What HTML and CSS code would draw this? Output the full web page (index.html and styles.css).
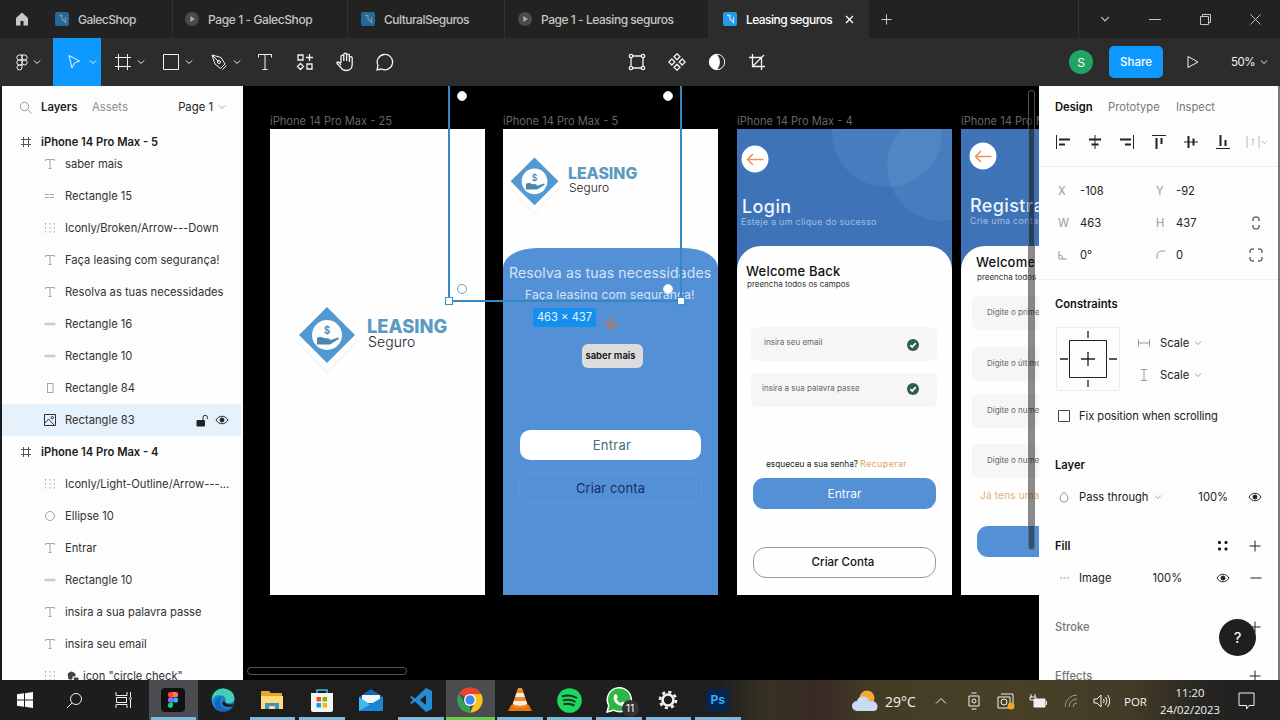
FILE: index.html
```html
<!DOCTYPE html>
<html lang="pt">
<head>
<meta charset="utf-8">
<title>Leasing seguros</title>
<link rel="stylesheet" href="styles.css">
</head>
<body>
<svg class="defs" aria-hidden="true">
  <symbol id="chev" viewBox="0 0 8 8"><path d="M1 2.5 4 5.5 7 2.5"/></symbol>
  <symbol id="file" viewBox="0 0 14 14"><rect width="14" height="14" rx="2" fill="currentColor" stroke="none"/><path d="M4 3.500h3v4M7 7l3.500 3.500V5" stroke="#bfe3fa" stroke-width="1.300"/></symbol>
  <symbol id="proto" viewBox="0 0 14 14"><circle cx="7" cy="7" r="7" fill="#4a4a4a" stroke="none"/><path d="M5.300 4 10 7 5.300 10z" fill="#aaa" stroke="none"/></symbol>
  <symbol id="text" viewBox="0 0 12 12"><path d="M1.500 3V1.500h9V3M6 1.500v9M4.500 10.500h3"/></symbol>
  <symbol id="frame" viewBox="0 0 12 12"><path d="M3.500 1v10M8.500 1v10M1 3.500h10M1 8.500h10"/></symbol>
  <symbol id="group" viewBox="0 0 12 12"><path d="M1.500 1v10M6 1v10M10.500 1v10" stroke-dasharray="1.500 2.500"/></symbol>
  <symbol id="line" viewBox="0 0 12 12"><path d="M1 5.200h10v1.500H1z" stroke-width=".7"/></symbol>
  <symbol id="dline" viewBox="0 0 12 12"><path d="M1 4.500h10M1 7.500h10" stroke-dasharray="4 1"/></symbol>
  <symbol id="tall" viewBox="0 0 12 12"><rect x="3.500" y="1.500" width="5.500" height="9"/></symbol>
  <symbol id="ell" viewBox="0 0 12 12"><circle cx="6" cy="6" r="4.500"/></symbol>
  <symbol id="eye" viewBox="0 0 14 12"><path d="M1 6c3-5 9-5 12 0-3 5-9 5-12 0z"/><circle cx="7" cy="6" r="2" fill="currentColor"/></symbol>
  <symbol id="plus" viewBox="0 0 12 12"><path d="M6 .5v11M.5 6h11"/></symbol>
  <symbol id="logo" viewBox="0 0 64 76"><path d="M2 38 32 70 62 38" stroke="#ececec" fill="none"/><path d="M32 4 60 32 32 60 4 32z" fill="#5299d1" stroke="none"/><circle cx="32" cy="32" r="15" fill="#fdfdfd" stroke="none"/><text x="32" y="31" class="coin">$</text><path d="M22 35q3-2 7 0l5 .5q2 1 0 2l9-3q2 0 0 2l-8 5H22z" fill="#4a87ae" stroke="none"/></symbol>
  <symbol id="back" viewBox="0 0 28 28"><circle cx="14" cy="14" r="13.500" fill="#fff" stroke="none"/><path d="M22.500 14.500h-16M12 9l-5.500 5.500L12 20" stroke="#e8955c" stroke-width="1.500"/></symbol>
  <symbol id="check" viewBox="0 0 12 12"><circle cx="6" cy="6" r="6" fill="#2d5f49" stroke="none"/><path d="M3.300 6.200 5.200 8 8.700 4.200" stroke="#fff" stroke-width="1.700"/></symbol>
</svg>

<div class="app">
  <header class="tabs">
    <div class="home"><svg width="14" height="14" viewBox="0 0 14 14"><path d="M1 6 7 .5 13 6v7.500H8.500V9h-3v4.500H1z" fill="#c8c8c8" stroke="none"/></svg></div>
    <div class="tab t1"><svg class="ti dim"><use href="#file"/></svg><span>GalecShop</span></div>
    <div class="tab t2"><svg class="ti"><use href="#proto"/></svg><span>Page 1 - GalecShop</span></div>
    <div class="tab t3"><svg class="ti dim"><use href="#file"/></svg><span>CulturalSeguros</span></div>
    <div class="tab t4"><svg class="ti"><use href="#proto"/></svg><span>Page 1 - Leasing seguros</span></div>
    <div class="tab active"><svg class="ti"><use href="#file"/></svg><span>Leasing seguros</span><svg class="x" width="9" height="9" viewBox="0 0 9 9"><path d="M1 1l7 7M8 1 1 8" stroke-width="1.300"/></svg></div>
    <div class="newtab"><svg width="11" height="11"><use href="#plus"/></svg></div>
    <div class="win">
      <span><svg width="10" height="10" viewBox="0 0 8 8"><use href="#chev"/></svg></span>
      <span><svg width="12" height="10" viewBox="0 0 12 10"><path d="M0 5.500h12"/></svg></span>
      <span><svg width="11" height="11" viewBox="0 0 11 11"><path d="M.5 2.500h8v8h-8zM2.500 2.500v-2h8v8h-2"/></svg></span>
      <span><svg width="11" height="11" viewBox="0 0 11 11"><path d="M.5.5l10 10M10.500.5l-10 10"/></svg></span>
    </div>
  </header>

  <nav class="toolbar">
    <div class="tools">
      <div class="tool menu"><svg width="12" height="17" viewBox="0 0 12 17"><path d="M6 1H3.300a2.500 2.500 0 0 0 0 5H6zM6 1h2.700a2.500 2.500 0 0 1 0 5H6zM6 6H3.300a2.500 2.500 0 0 0 0 5H6zM6 11H3.300A2.500 2.500 0 1 0 6 13.500z"/><circle cx="8.600" cy="8.500" r="2.500"/></svg><svg class="cv"><use href="#chev"/></svg></div>
      <div class="tool on"><svg width="16" height="16" viewBox="0 0 16 16"><path d="M3 1.500 13.500 7 8.500 9 6 14z"/></svg><svg class="cv"><use href="#chev"/></svg></div>
      <div class="tool"><svg width="18" height="18" viewBox="0 0 18 18"><path d="M4.500 1v16M13.500 1v16M1 4.500h16M1 13.500h16"/></svg><svg class="cv"><use href="#chev"/></svg></div>
      <div class="tool"><svg width="18" height="18" viewBox="0 0 18 18"><path d="M1.500 1.500h15v15h-15z"/></svg><svg class="cv"><use href="#chev"/></svg></div>
      <div class="tool"><svg width="18" height="18" viewBox="0 0 18 18"><path d="M2 2l9 2.500 4 6.500-4.500 4.500L5 11zM2 2l6.500 6.500M12.500 16.500l4-4"/><circle cx="9" cy="9" r="1.500"/></svg><svg class="cv"><use href="#chev"/></svg></div>
      <div class="tool s"><svg width="16" height="18" viewBox="0 0 16 18"><path d="M1.500 4.500v-3h13v3M8 1.500v15M5.500 16.500h5"/></svg></div>
      <div class="tool s"><svg class="bold" width="18" height="18" viewBox="0 0 18 18"><path d="M2 2h5v5H2zM11 11h5v5h-5zM13.500 1v7M10 4.500h7M4.500 10.500 7.500 13.500 4.500 16.500 1.500 13.500z"/></svg></div>
      <div class="tool s"><svg class="bold" width="20" height="20" viewBox="0 0 20 20"><path d="M6 11V4.500a1.400 1.400 0 0 1 2.800 0V9 2.500a1.400 1.400 0 0 1 2.800 0V9 3.500a1.400 1.400 0 0 1 2.800 0V10 6a1.400 1.400 0 0 1 2.800 0v6.500q0 6-6.200 6-3.500 0-5-2.800L2 11.500q-.5-1.500 1-1.500Q4.500 10 6 13"/></svg></div>
      <div class="tool s"><svg class="bold" width="18" height="18" viewBox="0 0 18 18"><path d="M1 17 2 12.500A7.700 7.700 0 1 1 5.500 16z"/></svg></div>
    </div>
    <div class="mid">
      <div class="tool s"><svg class="bold" width="18" height="18" viewBox="0 0 18 18"><path d="M4.500 3h9M4.500 15h9M3 4.500v9M15 4.500v9"/><g><circle cx="3" cy="3" r="1.700"/><circle cx="15" cy="3" r="1.700"/><circle cx="3" cy="15" r="1.700"/><circle cx="15" cy="15" r="1.700"/></g></svg></div>
      <div class="tool s"><svg class="bold" width="18" height="18" viewBox="0 0 18 18"><path d="M9 .8 12 3.800 9 6.800 6 3.800zM9 11.200l3 3-3 3-3-3zM3.800 6l3 3-3 3-3-3zM14.200 6l3 3-3 3-3-3z"/></svg></div>
      <div class="tool s"><svg width="18" height="18" viewBox="0 0 18 18"><circle cx="9" cy="9" r="7.700"/><path d="M9 1.300a7.700 7.700 0 0 0 0 15.400Q12 13 12 9T9 1.300z" fill="#fff" stroke="none"/></svg></div>
      <div class="tool s"><svg class="bold" width="18" height="18" viewBox="0 0 18 18"><path d="M4.500 1v12.500H17M1 4.500h12.500V17M4.500 13.500 16 2"/></svg></div>
    </div>
    <div class="right">
      <span class="avatar">S</span><span class="share">Share</span>
      <svg class="play" width="12" height="14" viewBox="0 0 12 14"><path d="M1 1.500 11 7 1 12.500z"/></svg>
      <span class="zoom">50%</span><svg class="cv"><use href="#chev"/></svg>
    </div>
  </nav>

  <main class="work">
    <aside class="layers">
      <div class="lhead"><svg class="search" width="13" height="13" viewBox="0 0 13 13"><circle cx="5.500" cy="5.500" r="4.200"/><path d="M8.700 8.700 12.500 12.500"/></svg><b>Layers</b><span class="mute">Assets</span><span class="page">Page 1</span><svg class="cv"><use href="#chev"/></svg></div>
      <div class="row top pinned"><svg><use href="#frame"/></svg><span>iPhone 14 Pro Max - 5</span></div>
      <div class="row"><svg><use href="#text"/></svg><span>saber mais</span></div>
      <div class="row"><svg><use href="#dline"/></svg><span>Rectangle 15</span></div>
      <div class="row"><svg><use href="#group"/></svg><span>Iconly/Broken/Arrow---Down</span></div>
      <div class="row"><svg><use href="#text"/></svg><span>Faça leasing com segurança!</span></div>
      <div class="row"><svg><use href="#text"/></svg><span>Resolva as tuas necessidades</span></div>
      <div class="row"><svg><use href="#line"/></svg><span>Rectangle 16</span></div>
      <div class="row"><svg><use href="#line"/></svg><span>Rectangle 10</span></div>
      <div class="row"><svg><use href="#tall"/></svg><span>Rectangle 84</span></div>
      <div class="row sel"><svg viewBox="0 0 12 12"><path d="M.5.500h11v11H.5zM1 9l3.500-4L10 11"/><circle cx="8.300" cy="3.700" r="1.200"/></svg><span>Rectangle 83</span>
        <i class="acts"><svg width="13" height="13" viewBox="0 0 13 13"><path d="M1 6.500h7.500v5.500H1z" fill="currentColor"/><path d="M7 6V3.500a2.200 2.200 0 0 1 4.400 0V5"/></svg><svg width="14" height="12"><use href="#eye"/></svg></i></div>
      <div class="row top"><svg><use href="#frame"/></svg><span>iPhone 14 Pro Max - 4</span></div>
      <div class="row"><svg><use href="#group"/></svg><span>Iconly/Light-Outline/Arrow---...</span></div>
      <div class="row"><svg><use href="#ell"/></svg><span>Ellipse 10</span></div>
      <div class="row"><svg><use href="#text"/></svg><span>Entrar</span></div>
      <div class="row"><svg><use href="#line"/></svg><span>Rectangle 10</span></div>
      <div class="row"><svg><use href="#text"/></svg><span>insira a sua palavra passe</span></div>
      <div class="row"><svg><use href="#text"/></svg><span>insira seu email</span></div>
      <div class="row"><svg><use href="#group"/></svg><svg class="puz" viewBox="0 0 12 12"><path d="M1 4q3-4 7 0v2H5v3H2zM7 8h4v3H8z" fill="#444"/></svg><span>icon "circle check"</span></div>
    </aside>

    <section class="canvas">
      <div class="phone p1"><span class="name n1">iPhone 14 Pro Max - 25</span>
        <svg class="logo l1"><use href="#logo"/></svg><b class="brand b1">LEASING</b><span class="sub s1">Seguro</span></div>
      <div class="phone p2"><span class="name n2">iPhone 14 Pro Max - 5</span>
        <svg class="logo l2"><use href="#logo"/></svg><b class="brand b2">LEASING</b><span class="sub s2">Seguro</span>
        <div class="sheet"></div>
        <span class="m needs">Resolva as tuas necessidades</span>
        <span class="m safe">Faça leasing com segurança!</span>
        <svg class="down" width="14" height="17" viewBox="0 0 14 17"><path d="M7 1v5M2 8l5 6 5-6zM7 6v8" stroke="#b9785a" stroke-width="1.600"/></svg>
        <div class="btn more"><span class="m">saber mais</span></div>
        <div class="btn enter"><span class="m">Entrar</span></div>
        <div class="btn create"><span class="m">Criar conta</span></div>
      </div>
      <div class="phone p3"><span class="name n3">iPhone 14 Pro Max - 4</span>
        <div class="hero"><i class="c1"></i><i class="c2"></i></div>
        <svg class="back k3"><use href="#back"/></svg>
        <span class="m title login">Login</span><span class="m tag tag3">Esteje a um clique do sucesso</span>
        <div class="card"></div>
        <span class="m wel wel3">Welcome Back</span><span class="m fill fill3">preencha todos os campos</span>
        <div class="field f1"><span class="m">insira seu email</span><svg><use href="#check"/></svg></div>
        <div class="field f2"><span class="m">insira a sua palavra passe</span><svg><use href="#check"/></svg></div>
        <span class="m forgot">esqueceu a sua senha?</span><span class="m recover">Recuperar</span>
        <div class="btn go"><span class="m">Entrar</span></div>
        <div class="btn acc"><span class="m">Criar Conta</span></div>
      </div>
      <div class="phone p4"><span class="name n4">iPhone 14 Pro Max - 3</span>
        <div class="hero"></div>
        <svg class="back k4"><use href="#back"/></svg>
        <span class="m title reg">Registrar</span><span class="m tag tag4">Crie uma conta</span>
        <div class="card"></div>
        <span class="m wel wel4">Welcome</span><span class="m fill fill4">preencha todos</span>
        <div class="field g1"><span class="m">Digite o primeiro</span></div>
        <div class="field g2"><span class="m">Digite o último</span></div>
        <div class="field g3"><span class="m">Digite o numero</span></div>
        <div class="field g4"><span class="m">Digite o numero</span></div>
        <span class="m have">Já tens uma</span>
        <div class="btn go4"></div>
      </div>
      <div class="selbox"><i class="h hl"></i><i class="h hr"></i><i class="r ra"></i><i class="r rb"></i><i class="r rc"></i><i class="r rd"></i></div>
      <span class="dims">463 × 437</span>
      <i class="vscroll"></i><i class="hscroll"></i>
    </section>

    <aside class="props">
      <div class="phead"><b>Design</b><span>Prototype</span><span>Inspect</span></div>
      <div class="align">
        <svg viewBox="0 0 14 14"><path d="M.5 0v14"/><path d="M3 4.500h11M3 9.500h6" class="w"/></svg>
        <svg viewBox="0 0 14 14"><path d="M7 0v14"/><path d="M1 4.500h12M3.500 9.500h7" class="w"/></svg>
        <svg viewBox="0 0 14 14"><path d="M13.500 0v14"/><path d="M0 4.500h11M5 9.500h6" class="w"/></svg>
        <svg viewBox="0 0 14 14"><path d="M0 .5h14"/><path d="M4.500 3v11M9.500 3v6" class="w"/></svg>
        <svg viewBox="0 0 14 14"><path d="M0 7h14"/><path d="M4.500 1v12M9.500 3.500v7" class="w"/></svg>
        <svg viewBox="0 0 14 14"><path d="M0 13.500h14"/><path d="M4.500 0v11M9.500 5v6" class="w"/></svg>
        <svg class="dis" viewBox="0 0 22 14"><path d="M1 1v12M13 1v12M7 4v6M5.500 4.500h3M16 6l2.500 2.500L21 6"/></svg>
      </div>
      <div class="geo">
        <i>X</i><span>-108</span><i>Y</i><span>-92</span><span></span>
        <i>W</i><span>463</span><i>H</i><span>437</span><svg width="8" height="14" viewBox="0 0 8 14"><path d="M1 5V3q0-2 2-2h2q2 0 2 2v2M1 9v2q0 2 2 2h2q2 0 2-2V9"/></svg>
        <i><svg width="9" height="9" viewBox="0 0 9 9"><path d="M1 0v8h8M1 4q4 0 4 4"/></svg></i><span>0°</span><i><svg width="10" height="10" viewBox="0 0 10 10"><path d="M1 9V6q0-5 5-5h3"/></svg></i><span>0</span><svg width="14" height="14" viewBox="0 0 14 14"><path d="M1 5V3q0-2 2-2h2M9 1h2q2 0 2 2v2M13 9v2q0 2-2 2H9M5 13H3q-2 0-2-2V9"/></svg>
      </div>
      <h3 class="hc">Constraints</h3>
      <div class="cons">
        <svg class="cbox" width="64" height="64" viewBox="0 0 64 64"><path d="M.5.500h63v63H.5z" stroke="#ececec"/><path d="M13.500 13.500h37v37h-37z"/><path d="M32 4v7M32 53v7M4 32h8M53 32h8M25 32h14M32 25v14" stroke-width="1.300"/></svg>
        <div class="scales">
          <div><svg width="12" height="10" viewBox="0 0 12 10"><path d="M.5 1.500v7M11.500 1.500v7M1 5h10"/></svg><span>Scale</span><svg class="cv"><use href="#chev"/></svg></div>
          <div><svg width="12" height="12" viewBox="0 0 12 12"><path d="M3 .5h6M3 11.500h6M6 1v10"/></svg><span>Scale</span><svg class="cv"><use href="#chev"/></svg></div>
        </div>
      </div>
      <div class="fix"><i></i><span>Fix position when scrolling</span></div>
      <h3 class="hl2">Layer</h3>
      <div class="line"><svg class="lead" viewBox="0 0 12 12"><path d="M6 1q4 3.500 4 6a4 4 0 0 1-8 0Q2 4.500 6 1z"/></svg><span>Pass through</span><svg class="cv"><use href="#chev"/></svg><span class="pc1">100%</span><svg class="end" width="14" height="12"><use href="#eye"/></svg></div>
      <h3 class="hf">Fill<span class="ic"><svg width="12" height="12" viewBox="0 0 12 12"><path d="M1.500 1.500h2v2h-2zM8 1.500h2v2H8zM1.500 8h2v2h-2zM8 8h2v2H8z" fill="#111"/></svg><svg width="12" height="12"><use href="#plus"/></svg></span></h3>
      <div class="line"><svg class="lead" viewBox="0 0 12 12"><path d="M2 6h9" stroke-dasharray="2 1.500"/></svg><span>Image</span><span class="pc2">100%</span><span class="ic"><svg width="14" height="12"><use href="#eye"/></svg><svg width="12" height="12" viewBox="0 0 12 12"><path d="M.5 6h11"/></svg></span></div>
      <h3 class="off">Stroke<span class="ic"><svg width="12" height="12"><use href="#plus"/></svg></span></h3>
      <h3 class="off ef">Effects<span class="ic"><svg width="12" height="12"><use href="#plus"/></svg></span></h3>
      <span class="help">?</span>
    </aside>
  </main>

  <footer class="taskbar">
    <div class="apps">
      <span><svg width="16" height="16" viewBox="0 0 16 16"><path d="M0 2.300 7 1.300v6.200H0zM8 1.200 16 0v7.500H8zM0 8.500h7v6.200L0 13.700zM8 8.500h8V16l-8-1.200z" fill="#fff" stroke="none"/></svg></span>
      <span><svg width="17" height="17" viewBox="0 0 17 17"><circle cx="10" cy="7" r="5.500"/><path d="M6 11 1 16"/></svg></span>
      <span><svg width="18" height="18" viewBox="0 0 18 18"><path d="M1 1v3.500h11V1M1 17v-3.500h11V17M1.500 6.500h10v5h-10zM15.500 1v5M15.500 9v8"/><circle cx="15.500" cy="7.500" r="1"/></svg></span>
      <span class="run cur"><svg width="24" height="24" viewBox="0 0 24 24"><g stroke="none"><rect width="24" height="24" rx="4" fill="#111"/><path d="M12 4H9.500a2.600 2.600 0 0 0 0 5.300H12z" fill="#f24e1e"/><path d="M12 4h2.500a2.600 2.600 0 0 1 0 5.300H12z" fill="#ff7262"/><path d="M12 9.300H9.500a2.600 2.600 0 0 0 0 5.300H12z" fill="#a259ff"/><circle cx="14.600" cy="12" r="2.600" fill="#1abcfe"/><path d="M12 14.600H9.500a2.600 2.600 0 1 0 2.500 2.600z" fill="#0acf83"/></g></svg></span>
      <span><svg width="24" height="24" viewBox="0 0 24 24"><g stroke="none"><circle cx="12" cy="12" r="11.500" fill="#1b86d3"/><path d="M1 9Q4 0 13 .5 23 2 23.500 10q0 5-6 5-4 0-3-2 1-5-4-5.500Q4 6 1 12z" fill="#42cfb4"/><path d="M9 12q-1 8 7 9 4 0 6-2-4 5-10 4.500Q3 22 4 14q1-4 7-6-2 2-2 4z" fill="#1465b8"/><path d="M13 12q1 4 6 4.500 3 0 4-2l-2 4q-8 2-10-3z" fill="#1e1e1e"/></g></svg></span>
      <span class="run"><svg width="24" height="22" viewBox="0 0 24 22"><g stroke="none"><path d="M1 2h8l2 2h11v16H1z" fill="#e5a52b"/><path d="M1 7h22v13H1z" fill="#ffdc78"/><path d="M5 14h14v6h-4v-3H9v3H5z" fill="#3c90d0"/></g></svg></span>
      <span class="run"><svg width="22" height="24" viewBox="0 0 22 24"><path d="M6 6V2h10v4" stroke="#49bce8" stroke-width="1.500"/><g stroke="none"><path d="M0 5h22v17q0 2-2 2H2q-2 0-2-2z" fill="#f5f5f5"/><path d="M5.500 9H10v4.500H5.500z" fill="#f25022"/><path d="M11.500 9H16v4.500h-4.500z" fill="#7fba00"/><path d="M5.500 15H10v4.500H5.500z" fill="#00a4ef"/><path d="M11.500 15H16v4.500h-4.500z" fill="#ffb900"/></g></svg></span>
      <span><svg width="24" height="22" viewBox="0 0 24 22"><g stroke="none"><path d="M0 8 12 0l12 8v14H0z" fill="#1267b5"/><path d="M3 6h18v8H3z" fill="#f1f6fa"/><path d="M0 8l12 8 12-8v14H0z" fill="#45b5ee"/><path d="M0 22 24 8v14z" fill="#1b87d4"/></g></svg></span>
      <span class="run"><svg width="24" height="24" viewBox="0 0 24 24"><g stroke="none"><path d="M17 0l6 3v18l-6 3L6 13.500 2.500 16 1 15l3-3-3-3 1.500-1L6 10.500zM17 7l-6 5 6 5z" fill="#258bd2" fill-rule="evenodd"/></g></svg></span>
      <span class="run cur green"><svg width="26" height="26" viewBox="0 0 26 26"><g stroke="none"><path d="M13 13 2 6.600A12.700 12.700 0 0 1 24 6.600z" fill="#e84235"/><path d="M13 13V25.700A12.700 12.700 0 0 1 2 6.600L8 17z" fill="#32a350"/><path d="M13 7h11.200A12.700 12.700 0 0 1 13 25.700L18 15z" fill="#fbc116"/><circle cx="13" cy="13" r="6" fill="#fff"/><circle cx="13" cy="13" r="4.700" fill="#4285f4"/></g></svg></span>
      <span class="run"><svg width="24" height="24" viewBox="0 0 24 24"><g stroke="none"><path d="M3 17h18l3 6H0z" fill="#e8720c"/><path d="M10 0h4l6 18q-8 4-16 0z" fill="#f28c20"/><path d="M8.500 5h7l1.300 4H7.200zM5.800 13h12.400l1 3q-7 3.500-14.400 0z" fill="#f4f0e9"/></g></svg></span>
      <span class="run"><svg width="25" height="25" viewBox="0 0 25 25"><circle cx="12.500" cy="12.500" r="12.300" fill="#1ed760" stroke="none"/><path d="M5 8.500q8-2.500 15 1.500M6 12.500q7-2 12.500 1.500M6.500 16.300q6-1.500 11 1.300" stroke="#16321f" stroke-width="2"/></svg></span>
      <span class="run wa"><svg width="26" height="26" viewBox="0 0 26 26"><path d="M1 25l1.800-6.500A12 12 0 1 1 7.500 23.200z" fill="#2cb742" stroke="#fff" stroke-width="1.500"/><path d="M8.500 7.500q2-1 2.500 1l.8 2-1.300 1.500q1.500 3 4.500 4l1.500-1.600 3 1.500q0 3-3.500 3.200Q8 17.500 7.500 10.500z" fill="#fff" stroke="none"/></svg><em>11</em></span>
      <span class="run"><svg width="22" height="22" viewBox="0 0 22 22"><circle cx="11" cy="11" r="5.500" stroke-width="2.600"/><circle cx="11" cy="11" r="8" stroke-width="2.600" stroke-dasharray="3.140 3.140"/></svg></span>
      <span class="run"><b class="ps">Ps</b></span>
    </div>
    <div class="tray">
      <svg class="wx" width="27" height="22" viewBox="0 0 27 22"><g stroke="none"><circle cx="15" cy="8" r="7.500" fill="#f5aa35"/><path d="M5 21a5 5 0 0 1 0-10q1-4.500 6-4.500 5 0 6.500 5Q24 10 25.500 15.500 26 21 21 21z" fill="#c7dbf3"/></g></svg>
      <span class="temp">29°C</span>
      <svg class="up" width="12" height="8" viewBox="0 0 12 8"><path d="M1 6.500 6 1.500l5 5"/></svg>
      <svg class="meet" width="12" height="18" viewBox="0 0 12 18"><path d="M1 4h10v10H1zM3.500 1h5M3.500 17h5"/><circle cx="6" cy="9" r="2"/></svg>
      <svg class="sec" width="18" height="18" viewBox="0 0 18 18"><path d="M1 5h12v11H1zM4 2h12v10"/><circle cx="7" cy="10" r="3"/><circle cx="14" cy="14" r="3.500" fill="#f5a623" stroke="none"/></svg>
      <svg class="bat" width="18" height="15" viewBox="0 0 18 15"><path d="M5 5h11v8H5z" fill="#eee"/><path d="M2 0v4M6 0v3M1 3h6v3H1zM17.500 7v4"/></svg>
      <svg class="wifi" width="14" height="14" viewBox="0 0 14 14"><path d="M1 13A12 12 0 0 1 13 1M5 13a8 8 0 0 1 8-8M9 13a4 4 0 0 1 4-4" stroke="#999"/></svg>
      <svg class="vol" width="17" height="14" viewBox="0 0 17 14"><path d="M1 5h3l4-4v12L4 9H1zM10.500 5q1.500 2 0 4M12.500 3q3 4 0 8M14.500 1q4.500 6 0 12"/></svg>
      <span class="por">POR</span>
      <div class="clock"><span>11:20</span><span>24/02/2023</span></div>
      <svg class="note" width="17" height="18" viewBox="0 0 17 18"><path d="M1 1h15v12.500h-5l-2.500 3.500v-3.500H1z"/></svg>
    </div>
  </footer>
</div>
</body>
</html>
```

FILE: styles.css
```css
* { box-sizing: border-box; }
body { margin: 0; width: 1280px; height: 720px; overflow: hidden; font-family: Inter, "Liberation Sans", sans-serif; font-size: 11px; color: #222; background: #222; }
svg { fill: none; stroke: currentColor; flex: none; display: block; }
.defs { position: absolute; width: 0; height: 0; }
i, em { font-style: normal; }
span, b { white-space: nowrap; }
.app { display: flex; flex-direction: column; width: 1280px; height: 720px; }
.cv { width: 8px; height: 8px; }
.bold { stroke-width: 1.3; }

/* window tabs */
.tabs { display: flex; height: 38px; background: #222; color: #c4c4c4; font-size: 12px; font-weight: 500; letter-spacing: -.26px; align-items: stretch; }
.home { width: 43px; display: flex; align-items: center; justify-content: center; }
.tab { display: flex; align-items: center; padding-left: 12px; border-right: 1px solid #303030; }
.tab span { margin-left: 9px; }
.ti { width: 14px; height: 14px; color: #2499e8; }
.ti.dim { opacity: .6; }
.t1 { width: 130px; letter-spacing: -.7px; letter-spacing: -.5px; } .t2 { width: 175px; letter-spacing: -.4px; } .t3 { width: 157px; padding-left: 13px; letter-spacing: -.5px; } .t4 { width: 204px; padding-left: 13px; letter-spacing: -.46px; }
.active { width: 160px; background: #2c2c2c; color: #fff; padding-left: 14px; border: 0; letter-spacing: -.55px; }
.active .x { margin-left: 13px; }
.newtab { padding-left: 12px; display: flex; align-items: center; color: #ddd; }
.win { margin-left: auto; width: 202px; border-left: 1px solid #333; display: flex; }
.win span { width: 50px; display: flex; align-items: center; justify-content: center; }
.win span:first-child { margin-left: 1px; }

/* toolbar */
.toolbar { height: 48px; background: #2c2c2c; color: #f2f2f2; display: flex; justify-content: space-between; }
.tools, .mid, .right { display: flex; align-items: center; }
.tools { width: 405px; }
.tool { width: 48px; height: 48px; display: flex; align-items: center; justify-content: space-between; padding: 0 4px 0 13px; }
.tool.menu { width: 53px; padding: 0 12px 0 16px; }
.tool.on { background: #0d99ff; }
.tool.s { width: 40px; padding: 0; justify-content: center; }
.mid { margin-left: 212px; }
.right { width: 211px; margin-left: auto; }
.avatar { width: 24px; height: 24px; border-radius: 50%; background: #22a463; color: #fff; display: flex; align-items: center; justify-content: center; font-size: 12px; }
.share { width: 54px; height: 32px; border-radius: 5px; background: #0d99ff; color: #fff; display: flex; align-items: center; justify-content: center; font-size: 11.500px; font-weight: 500; margin-left: 16px; }
.play { margin-left: 24px; }
.zoom { margin-left: 32px; font-size: 11.500px; margin-right: 5px; letter-spacing: -.5px; }

.work { display: flex; height: 594px; }

/* layers panel */
.layers { width: 243px; border-left: 2px solid #1b1b1b; background: #fdfdfd; overflow: hidden; padding-top: 1px; }
.lhead { height: 40px; display: flex; align-items: center; color: #222; font-size: 11.300px; padding-right: 17px; }
.search { margin: 0 9px 0 17px; color: #999; }
.lhead b { width: 51px; font-weight: 600; }
.mute { color: #8d8d8d; }
.page { margin-left: auto; margin-right: 5px; }
.lhead .cv { color: #aaa; }
.row { height: 32px; display: flex; align-items: center; padding-left: 42px; font-size: 11.200px; color: #333; }
.row > svg { width: 12px; height: 12px; margin-right: 9px; color: #a5a5a5; }
.row.top { padding-left: 18px; font-weight: 600; color: #1a1a1a; }
.row.top > svg { color: #555; }
.pinned { height: 30px; margin-bottom: -9px; position: relative; }
.row.sel { background: #e5f1fb; margin-right: 2px; }
.row.sel > svg { color: #333; }
.row > svg.puz { margin: 0 4px 0 2px; color: #444; }
.acts { margin-left: auto; display: flex; gap: 6px; color: #222; padding-right: 12px; align-items: center; }

/* design canvas: objects sit at free positions */
.canvas { width: 796px; background: #000; position: relative; overflow: hidden; }
.phone { position: absolute; top: 43px; width: 215px; height: 466px; background: #fefefe; }
.phone > * { position: absolute; }
.p1 { left: 27px; } .p2 { left: 260px; } .p3 { left: 494px; } .p4 { left: 718px; }
.name { top: -15px; left: 0; font-size: 11.100px; color: #666; line-height: 14px; }
.m { font-family: Inter, sans-serif; line-height: 1; white-space: nowrap; }
.coin { font: 600 10px Inter, sans-serif; fill: #4a87ae; stroke: none; text-anchor: middle; }
.l1 { left: 25px; top: 174px; width: 64px; height: 76px; }
.l2 { left: 4px; top: 25px; width: 55px; height: 65px; }
.brand { color: #5c9ac4; font-weight: 800; line-height: 1; }
.b1 { left: 97px; top: 188px; font-size: 18.300px; } .b2 { left: 65px; top: 37px; font-size: 15.800px; }
.sub { line-height: 1; color: #222; font-weight: 300; }
.s1 { left: 98px; top: 206px; font-size: 14px; letter-spacing: .1px; } .s2 { left: 66px; top: 53px; font-size: 12px; }
.sheet { left: 0; top: 119px; width: 215px; height: 347px; background: #5490d5; border-radius: 34px 34px 0 0 / 20px 20px 0 0; }
.needs { left: 6px; top: 137px; font-size: 14px; letter-spacing: .14px; color: #d4e4f7; }
.safe { left: 22px; top: 160px; font-size: 12px; letter-spacing: .15px; color: #d4e4f7; }
.down { left: 101px; top: 186px; }
.btn { display: flex; align-items: center; justify-content: center; }
.more { left: 79px; top: 215px; width: 61px; height: 24px; border-radius: 6px; background: #dcdbdd; color: #111; font-size: 9.500px; font-weight: 600; padding-right: 4px; }
.enter { left: 17px; top: 301px; width: 181px; height: 30px; border-radius: 10px; background: #fff; color: #4c6a78; font-size: 13px; letter-spacing: .3px; padding-left: 3px; }
.create { left: 16px; top: 344px; width: 183px; height: 30px; border-radius: 10px; border: 1px solid #6698cb; color: #1a2c66; font-size: 13px; letter-spacing: .1px; }
.hero { left: 0; top: 0; width: 100%; height: 160px; background: #3e73b8; overflow: hidden; }
.hero i { position: absolute; border-radius: 50%; width: 110px; height: 110px; background: rgba(120,175,220,.17); }
.c1 { left: 95px; top: -52px; } .c2 { left: 150px; top: -18px; }
.back { width: 28px; height: 28px; }
.k3 { left: 4px; top: 16px; } .k4 { left: 8px; top: 13px; }
.title { font-size: 18px; color: #eef5fc; font-weight: 500; letter-spacing: .4px; }
.login { left: 5px; top: 69px; } .reg { left: 9px; top: 68px; }
.tag { font-size: 9px; letter-spacing: .25px; color: #9dbee3; }
.tag3 { left: 4px; top: 88px; } .tag4 { left: 9px; top: 87px; }
.card { left: 0; top: 117px; width: 100%; height: 349px; background: #fefefe; border-radius: 24px 24px 0 0; }
.wel { font-size: 13px; color: #111; font-weight: 500; letter-spacing: .2px; }
.wel3 { left: 9px; top: 136px; } .wel4 { left: 15px; top: 127px; }
.fill { font-size: 8px; color: #333; }
.fill3 { left: 10px; top: 151px; } .fill4 { left: 16px; top: 144px; }
.field { background: #f6f6f6; border-radius: 6px; width: 186px; height: 34px; display: flex; align-items: center; justify-content: space-between; font-size: 8px; color: #666; padding: 0 18px 0 13px; }
.field svg { width: 12px; height: 12px; }
.f1 { left: 14px; top: 198px; } .f2 { left: 14px; top: 244px; padding-left: 11px; }
.field .m { margin-top: -4px; }
.field svg { margin-top: 1px; }
.f2 svg { margin-top: -3px; }
.g1 { left: 11px; top: 167px; } .g2 { left: 11px; top: 218px; } .g3 { left: 11px; top: 265px; } .g4 { left: 11px; top: 315px; }
.p4 .field .m { margin-top: -2px; padding-left: 2px; }
.forgot { left: 29px; top: 331px; font-size: 8.300px; color: #222; }
.recover { left: 123px; top: 330px; font-size: 9px; letter-spacing: .35px; color: #e0a262; }
.go { left: 16px; top: 349px; width: 183px; height: 31px; border-radius: 11px; background: #5490d5; color: #f4f8fd; font-size: 12px; }
.acc { left: 16px; top: 418px; width: 183px; height: 31px; border-radius: 13px; border: 1px solid #999; color: #111; font-size: 11.500px; font-weight: 500; padding-right: 3px; }
.have { left: 19px; top: 361px; font-size: 10px; letter-spacing: .2px; color: #d9b07c; }
.go4 { left: 16px; top: 397px; width: 183px; height: 31px; border-radius: 11px; background: #5490d5; }
.selbox { position: absolute; left: 205px; top: -6px; width: 234px; height: 222px; border: 2px solid #3388c8; }
.selbox i { position: absolute; background: #fff; }
.h { width: 8px; height: 8px; border: 1px solid #3a8fc9; bottom: -5px; }
.hl { left: -5px; } .hr { right: -5px; }
.r { width: 10px; height: 10px; border-radius: 50%; border: 1px solid #dce6f0; }
.ra { left: 7px; top: 9px; } .rb { right: 7px; top: 9px; } .rc { left: 7px; bottom: 6px; border-color: #6aa0b0; } .rd { right: 7px; bottom: 6px; }
.dims { position: absolute; left: 290px; top: 222px; width: 63px; height: 19px; background: #1490ec; color: #e8f5ff; font-size: 11.200px; line-height: 19px; text-align: center; border-radius: 2px; }
.vscroll { position: absolute; left: 785px; top: 4px; width: 7px; height: 460px; border-radius: 4px; background: rgba(0,0,0,.45); border: 1px solid rgba(130,130,130,.6); }
.hscroll { position: absolute; left: 4px; top: 581px; width: 160px; height: 8px; border-radius: 4px; border: 1px solid #555; }

/* properties panel */
.props { width: 241px; background: #fdfdfd; border-right: 2px solid #777; position: relative; overflow: hidden; padding-top: 1px; }
.phead { height: 40px; display: flex; align-items: center; padding-left: 16px; font-size: 11.200px; color: #777; }
.phead b { width: 53px; color: #111; font-weight: 600; } .phead span:nth-child(2) { width: 68px; }
.align { height: 40px; display: flex; padding: 8px 0 0 17px; gap: 18px; border-bottom: 1px solid #eee; color: #222; }
.align svg { width: 14px; height: 14px; }
.align .dis { width: 22px; color: #bbb; margin-left: -2px; }
.w { stroke-width: 2; }
.geo { display: grid; grid-template-columns: 24px 76px 20px 70px 20px; grid-template-rows: repeat(3, 32px); align-items: center; padding: 8px 0 8px 17px; border-bottom: 1px solid #eee; height: 113px; font-size: 11.200px; }
.geo i { color: #9a9a9a; padding-left: 2px; }
.geo i:nth-child(5n+3) { padding-left: 0; }
.geo > svg { justify-self: center; }
h3 { margin: 0; font-size: 11.200px; font-weight: 600; color: #111; padding: 0 17px 0 16px; height: 32px; display: flex; align-items: center; justify-content: space-between; }
.hc { margin-top: 8px; }
.cons { display: flex; padding: 7px 0 0 17px; height: 72px; }
.cbox { color: #222; }
.scales { margin-left: 18px; }
.scales div { height: 32px; display: flex; align-items: center; font-size: 11.200px; }
.scales span { margin: 0 5px 0 10px; }
.scales svg { color: #999; }
.fix { height: 32px; display: flex; align-items: center; padding-left: 19px; font-size: 11.200px; letter-spacing: -.05px; margin-top: 8px; }
.fix i { width: 12px; height: 12px; border: 1px solid #444; border-radius: 1px; margin-right: 9px; }
.hl2 { margin-top: 17px; }
.line { height: 32px; display: flex; align-items: center; padding: 0 16px 0 19px; font-size: 11.200px; }
.lead { width: 12px; height: 12px; margin-right: 9px; color: #999; }
.line .cv { margin-left: 5px; color: #aaa; }
.pc1 { margin-left: auto; margin-right: 20px; }
.pc2 { margin-left: 41px; }
.ic { display: flex; gap: 20px; color: #222; align-items: center; }
.line .ic { margin-left: auto; }
.hf { margin-top: 17px; }
.off { margin-top: 17px; color: #777; font-weight: 500; }
.help { position: absolute; left: 180px; top: 533px; width: 37px; height: 37px; border-radius: 50%; background: #1f1f1f; color: #fff; font-size: 15px; text-align: center; line-height: 37px; }

/* taskbar */
.taskbar { height: 40px; display: flex; color: #f2f2f2; background: linear-gradient(90deg, #1d1d1e 0, #1f1f1f 720px, #373222 770px, #392925 815px, #443b25 870px, #474027 1020px, #433b26 1130px, #242321 1210px, #202020 1280px); }
.apps { display: flex; }
.apps span { width: 49.500px; height: 40px; display: flex; align-items: center; justify-content: center; border-bottom: 3px solid transparent; padding-top: 3px; }
.apps span.run { border-image: linear-gradient(90deg, transparent 10%, #7eb8dc 10%, #7eb8dc 90%, transparent 90%) 3; }
.apps span.cur { background: #4a4c50; }
.apps span.green { border-image: none; border-bottom-color: #6bcb4c; }
.wa { position: relative; }
.wa em { position: absolute; right: 5px; bottom: 0; width: 17px; height: 17px; border-radius: 50%; background: #333; font-size: 10.500px; line-height: 17px; text-align: center; }
.ps { width: 23px; height: 22px; border-radius: 4px; background: #05264d; color: #3ba8f8; font-size: 12px; line-height: 22px; text-align: center; }
.tray { margin-left: auto; display: flex; align-items: center; width: 428px; padding-top: 2px; font-family: "Open Sans", sans-serif; font-size: 12px; }
.temp { font-size: 14px; margin-left: 6px; width: 50px; }
.up { margin-right: 21px; } .meet { margin-right: 17px; } .sec { margin-right: 14px; } .bat { margin-right: 17px; } .wifi { margin-right: 15px; } .vol { margin-right: 14px; }
.por { width: 24px; font-size: 11.500px; }
.clock { display: flex; flex-direction: column; align-items: center; line-height: 17px; width: 72px; margin-left: 6px; font-size: 11.300px; }
.note { margin-left: 12px; }
```
